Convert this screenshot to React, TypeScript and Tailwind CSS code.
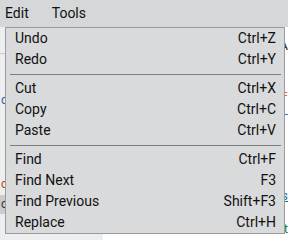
import React from 'react';

type Item = { label: string; keys: string } | 'sep';

const items: Item[] = [
  { label: 'Undo', keys: 'Ctrl+Z' },
  { label: 'Redo', keys: 'Ctrl+Y' },
  'sep',
  { label: 'Cut', keys: 'Ctrl+X' },
  { label: 'Copy', keys: 'Ctrl+C' },
  { label: 'Paste', keys: 'Ctrl+V' },
  'sep',
  { label: 'Find', keys: 'Ctrl+F' },
  { label: 'Find Next', keys: 'F3' },
  { label: 'Find Previous', keys: 'Shift+F3' },
  { label: 'Replace', keys: 'Ctrl+H' },
];

const App: React.FC = () => {
  return (
    <div className="relative w-[288px] h-[240px] overflow-hidden bg-[#eceef0] font-['Roboto',sans-serif] text-[14px] text-[#111]">
      {/* menu bar */}
      <div className="h-[27px] bg-[#d5d7d9] flex items-center gap-[23px] px-[5px]">
        <span>Edit</span>
        <span>Tools</span>
      </div>

      {/* page behind the menu */}
      <div className="flex h-[213px]">
        <div className="w-[103px] flex flex-col text-[12px]">
          <div className="h-[27px] border-b border-[#c8cacc]" />
          <div className="pl-[1px] pt-[37px] text-[#2563a8]">c</div>
          <div className="pl-[1px] pt-[66px] text-[#c2410c]">cp</div>
          <div className="mt-[2px] h-[19px] bg-[#c9cbce] pl-[1px] text-[#333]">c</div>
        </div>
        <div className="flex-1 bg-white flex flex-col items-end pr-[0px] text-[13px]">
          <div className="pt-[9px] text-[#222]">A</div>
          <div className="pt-[29px] text-[#ea580c]">=</div>
          <div className="pt-[0px] text-[#2563eb]">-</div>
          <div className="pt-[62px] text-[#0e7490] underline">s</div>
          <div className="pt-[14px] text-[#15803d]">t</div>
          <div className="self-start pl-[30px] pt-[0px] text-[#1e3a8a] text-[13px]">Organizing Code</div>
        </div>
      </div>

      {/* dropdown menu */}
      <div className="absolute left-[5px] top-[27px] w-[280px] bg-[#d9dadc] border border-[#9c9c9c] flex flex-col">
        {items.map((it, i) =>
          it === 'sep' ? (
            <div key={i} className="h-[8px] flex items-center pl-[4px] pr-[3px]">
              <div className="h-px w-full bg-[#7d7d7d]" />
            </div>
          ) : (
            <div key={i} className="h-[21px] flex items-center justify-between pl-[9px] pr-[8px]">
              <span>{it.label}</span>
              <span>{it.keys}</span>
            </div>
          )
        )}
      </div>
    </div>
  );
};

export default App;
